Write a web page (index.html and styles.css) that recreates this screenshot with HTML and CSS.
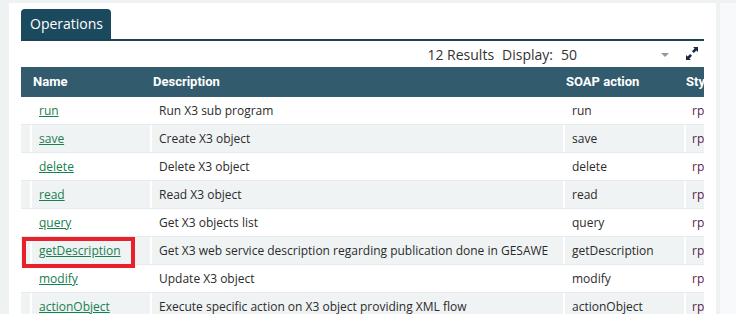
FILE: index.html
```html
<!DOCTYPE html>
<html>
<head>
<meta charset="utf-8">
<link rel="stylesheet" href="styles.css">
</head>
<body>
<div class="page">
  <div class="panel">
    <div class="tabs">
      <div class="tab">Operations</div>
    </div>
    <div class="toolbar">
      <span class="results">12 Results</span>
      <span class="display">Display:</span>
      <span class="count">50</span>
      <span class="caret"></span>
      <svg class="expand" width="14" height="15" viewBox="0 0 14 15">
        <path d="M13 1 L8 1 L9.6 2.6 L7 5.2 L8.8 7 L11.4 4.4 L13 6 Z" fill="#1b2744"/>
        <path d="M1 14 L6 14 L4.4 12.4 L7 9.8 L5.2 8 L2.6 10.6 L1 9 Z" fill="#1b2744"/>
      </svg>
    </div>
    <div class="table">
      <div class="head">
        <div class="h h-name">Name</div>
        <div class="h h-desc">Description</div>
        <div class="h h-soap">SOAP action</div>
        <div class="h h-style">Style</div>
      </div>
      <div class="row"><div class="c c0"></div><div class="c"><a href="#">run</a></div><div class="c">Run X3 sub program</div><div class="c">run</div><div class="c st">rpc</div></div>
      <div class="row alt"><div class="c c0"></div><div class="c"><a href="#">save</a></div><div class="c">Create X3 object</div><div class="c">save</div><div class="c st">rpc</div></div>
      <div class="row"><div class="c c0"></div><div class="c"><a href="#">delete</a></div><div class="c">Delete X3 object</div><div class="c">delete</div><div class="c st">rpc</div></div>
      <div class="row alt"><div class="c c0"></div><div class="c"><a href="#">read</a></div><div class="c">Read X3 object</div><div class="c">read</div><div class="c st">rpc</div></div>
      <div class="row"><div class="c c0"></div><div class="c"><a href="#">query</a></div><div class="c">Get X3 objects list</div><div class="c">query</div><div class="c st">rpc</div></div>
      <div class="row alt marked"><div class="c c0"></div><div class="c"><a href="#">getDescription</a></div><div class="c">Get X3 web service description regarding publication done in GESAWE</div><div class="c">getDescription</div><div class="c st">rpc</div><span class="mark"></span></div>
      <div class="row"><div class="c c0"></div><div class="c"><a href="#">modify</a></div><div class="c">Update X3 object</div><div class="c">modify</div><div class="c st">rpc</div></div>
      <div class="row alt"><div class="c c0"></div><div class="c"><a href="#">actionObject</a></div><div class="c">Execute specific action on X3 object providing XML flow</div><div class="c">actionObject</div><div class="c st">rpc</div></div>
    </div>
  </div>
  <div class="side"></div>
</div>
</body>
</html>
```

FILE: styles.css
```css
html, body {
  margin: 0;
  padding: 0;
  background: #eff2f3;
  font-family: "Open Sans", "Liberation Sans", sans-serif;
  color: #2b2b2b;
  overflow: hidden;
}
.page {
  display: flex;
  height: 314px;
  padding-top: 3px;
  box-sizing: border-box;
}
.panel {
  margin-left: 9px;
  width: 707px;
  background: #fff;
  padding: 6px 12px 0 12px;
  box-sizing: border-box;
  flex: none;
}
.side {
  margin-left: 4px;
  flex: 1;
  background: #f8f9fa;
}
.tabs {
  border-bottom: 2px solid #1b4356;
  height: 30px;
  display: flex;
  align-items: flex-end;
}
.tab {
  background: #1b4a5e;
  color: #fff;
  font-size: 14px;
  height: 30px;
  line-height: 29px;
  padding: 0 8px 0 9px;
  border-radius: 4px 4px 0 0;
  box-sizing: border-box;
  width: 90px;
}
.toolbar {
  height: 26px;
  display: flex;
  align-items: center;
  justify-content: flex-end;
  font-size: 14px;
  color: #333;
}
.results { margin-right: 8px; }
.display { margin-right: 8px; }
.count { width: 100px; }
.caret {
  width: 0; height: 0;
  border-left: 4px solid transparent;
  border-right: 4px solid transparent;
  border-top: 4px solid #8a9aa6;
  margin-right: 16px;
  margin-top: 1px;
}
.expand { margin-right: 5px; margin-top: -2px; }
.table {
  overflow: hidden;
  width: 683px;
}
.head, .row {
  display: grid;
  grid-template-columns: 9px 120px 413px 121px 120px;
  width: 783px;
}
.head {
  background: #325b6e;
  height: 30px;
  color: #fff;
  font-family: Roboto, "Liberation Sans", sans-serif;
  font-weight: bold;
  font-size: 13px;
  line-height: 30px;
}
.h { white-space: nowrap; }
.h-name { grid-column: 1 / span 2; padding-left: 12px; }
.h-desc { padding-left: 3px; }
.h-soap { padding-left: 3px; }
.h-style { padding-left: 2px; }
.row {
  height: 28px;
  line-height: 27px;
  font-size: 12px;
  border-bottom: 1px solid #e7ebed;
  box-sizing: border-box;
  position: relative;
}
.row.alt { background: #f0f3f4; }
.c {
  padding-left: 7px;
  white-space: nowrap;
  border-left: 2px solid transparent;
  box-sizing: border-box;
}
.c0 { border-left: none; padding: 0; }
.row.alt .c:not(.c0) { border-left-color: #fff; }
.c.st { color: #5a1a4a; padding-left: 6px; }
.c a {
  color: #17804f;
  text-decoration: underline;
}
.mark {
  position: absolute;
  left: 1px;
  top: 0;
  width: 113px;
  height: 31px;
  border: 4px solid #e8202a;
  box-sizing: border-box;
}
```
